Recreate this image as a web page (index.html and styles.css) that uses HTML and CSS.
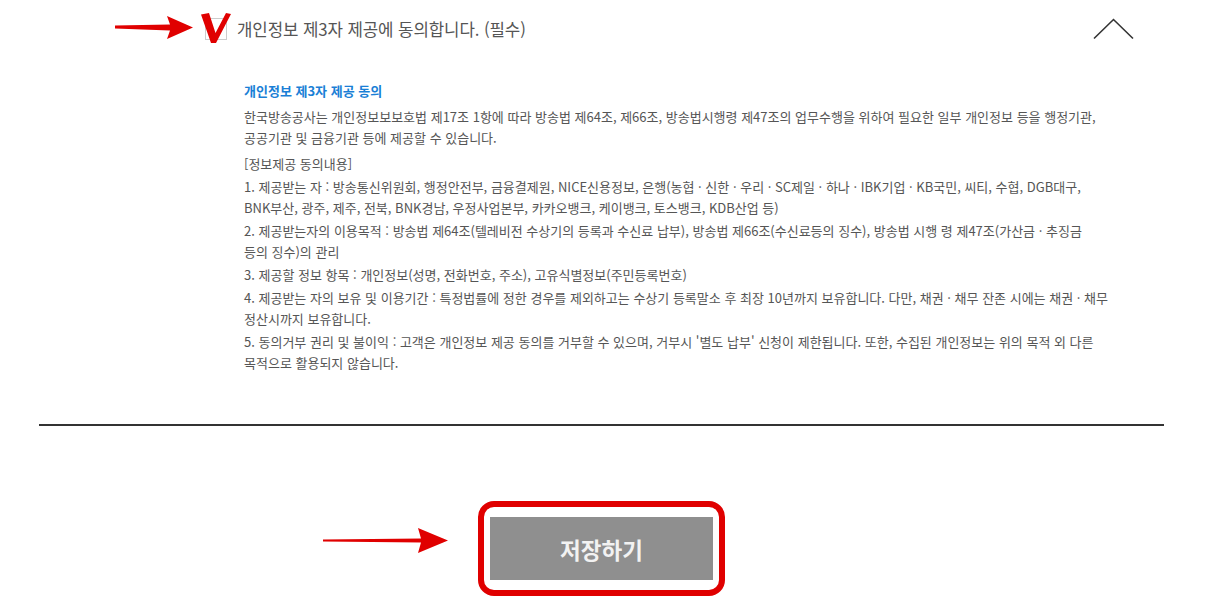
FILE: index.html
```html
<!DOCTYPE html>
<html lang="ko">
  <head>
    <meta charset="UTF-8" />
    <title>개인정보 제3자 제공 동의</title>
    <link rel="stylesheet" href="styles.css">
  </head>
  <body>
    <div class="container">
      <!-- 동의 항목 헤더 -->
      <div class="agree-head">
        <label class="agree-label">
          <span class="checkbox"></span>
          <span class="agree-title">개인정보 제3자 제공에 동의합니다. (필수)</span>
        </label>
        <svg class="chevron" width="42" height="22" viewBox="0 0 42 22">
          <polyline points="1,20.5 20.5,1.5 40,20.5" fill="none" stroke="#333" stroke-width="1.6" />
        </svg>

        <!-- 안내 표시 -->
        <svg class="mark-arrow head-arrow" width="80" height="24" viewBox="0 0 80 24">
          <polygon points="0,9.5 55,8.5 52,0 78,11.5 52,23 55,14.5 0,12.5" fill="#e00000" />
        </svg>
        <svg class="mark-check" width="34" height="34" viewBox="0 0 34 34">
          <polygon points="2,3.5 10,2 16.5,22 27,2 32,3 17,32 12,32" fill="#e00000" />
        </svg>
      </div>

      <div class="agree-body">
        <h4>개인정보 제3자 제공 동의</h4>
        <p class="lead">한국방송공사는 개인정보보보호법 제17조 1항에 따라 방송법 제64조, 제66조, 방송법시행령 제47조의 업무수행을 위하여 필요한 일부 개인정보 등을 행정기관,<br>공공기관 및 금융기관 등에 제공할 수 있습니다.</p>
        <p>[정보제공 동의내용]</p>
        <p>1. 제공받는 자 : 방송통신위원회, 행정안전부, 금융결제원, NICE신용정보, 은행(농협 · 신한 · 우리 · SC제일 · 하나 · IBK기업 · KB국민, 씨티, 수협, DGB대구,<br>BNK부산, 광주, 제주, 전북, BNK경남, 우정사업본부, 카카오뱅크, 케이뱅크, 토스뱅크, KDB산업 등)</p>
        <p>2. 제공받는자의 이용목적 : 방송법 제64조(텔레비전 수상기의 등록과 수신료 납부), 방송법 제66조(수신료등의 징수), 방송법 시행 령 제47조(가산금 · 추징금<br>등의 징수)의 관리</p>
        <p>3. 제공할 정보 항목 : 개인정보(성명, 전화번호, 주소), 고유식별정보(주민등록번호)</p>
        <p>4. 제공받는 자의 보유 및 이용기간 : 특정법률에 정한 경우를 제외하고는 수상기 등록말소 후 최장 10년까지 보유합니다. 다만, 채권 · 채무 잔존 시에는 채권 · 채무<br>정산시까지 보유합니다.</p>
        <p>5. 동의거부 권리 및 불이익 : 고객은 개인정보 제공 동의를 거부할 수 있으며, 거부시 '별도 납부' 신청이 제한됩니다. 또한, 수집된 개인정보는 위의 목적 외 다른<br>목적으로 활용되지 않습니다.</p>
      </div>

      <div class="btn-area">
        <div class="btn-wrap">
          <button type="button" class="btn-save">저장하기</button>
          <svg class="mark-arrow btn-arrow" width="126" height="28" viewBox="0 0 126 28">
            <polygon points="0,12.5 98,11.5 95,1 125,13.5 95,26 98,15.5 0,14.5" fill="#e00000" />
          </svg>
        </div>
      </div>
    </div>
  </body>
</html>
```

FILE: styles.css
```css
/* General Styles */
body {
  margin: 0;
  background: #fff;
  font-family: "Noto Sans CJK KR", "Noto Sans", sans-serif;
  color: #555;
}

.container {
  margin: 0 66px 0 39px;
}

/* Agree Header */
.agree-head {
  position: relative;
  display: flex;
  align-items: center;
  height: 58px;
  padding: 0 29px 0 166px;
}

.agree-label {
  display: flex;
  align-items: center;
  gap: 10px;
}

.checkbox {
  width: 20px;
  height: 20px;
  border: 1px solid #ccc;
  background: #fff;
}

.agree-title {
  font-size: 16.8px;
  color: #555;
  letter-spacing: -0.1px;
}

.chevron {
  margin-left: auto;
  margin-top: -1px;
}

/* Annotation Marks */
.mark-arrow,
.mark-check {
  position: absolute;
}

.head-arrow {
  left: 76px;
  top: 16px;
}

.mark-check {
  left: 160px;
  top: 11px;
}

/* Agree Content */
.agree-body {
  padding: 22px 60px 49px 205px;
  border-bottom: 2px solid #333;
  font-size: 13px;
  line-height: 21px;
}

.agree-body h4 {
  margin: 0 0 5px;
  font-size: 13px;
  color: #1a7fd6;
}

.agree-body p {
  margin: 0 0 2px;
  white-space: nowrap;
}

.agree-body .lead {
  margin-bottom: 5px;
}

/* Save Button */
.btn-area {
  display: flex;
  justify-content: center;
  padding-top: 75px;
}

.btn-wrap {
  position: relative;
  padding: 10px 6px;
  border: 6px solid #e00000;
  border-radius: 16px;
  line-height: 0;
}

.btn-save {
  width: 223px;
  height: 63px;
  border: none;
  background: #8f8f8f;
  color: #f2f2f2;
  font-family: "Noto Sans CJK KR", "Noto Sans", sans-serif;
  font-size: 22.5px;
  font-weight: bold;
}

.btn-arrow {
  left: -161px;
  top: 20px;
}
```
